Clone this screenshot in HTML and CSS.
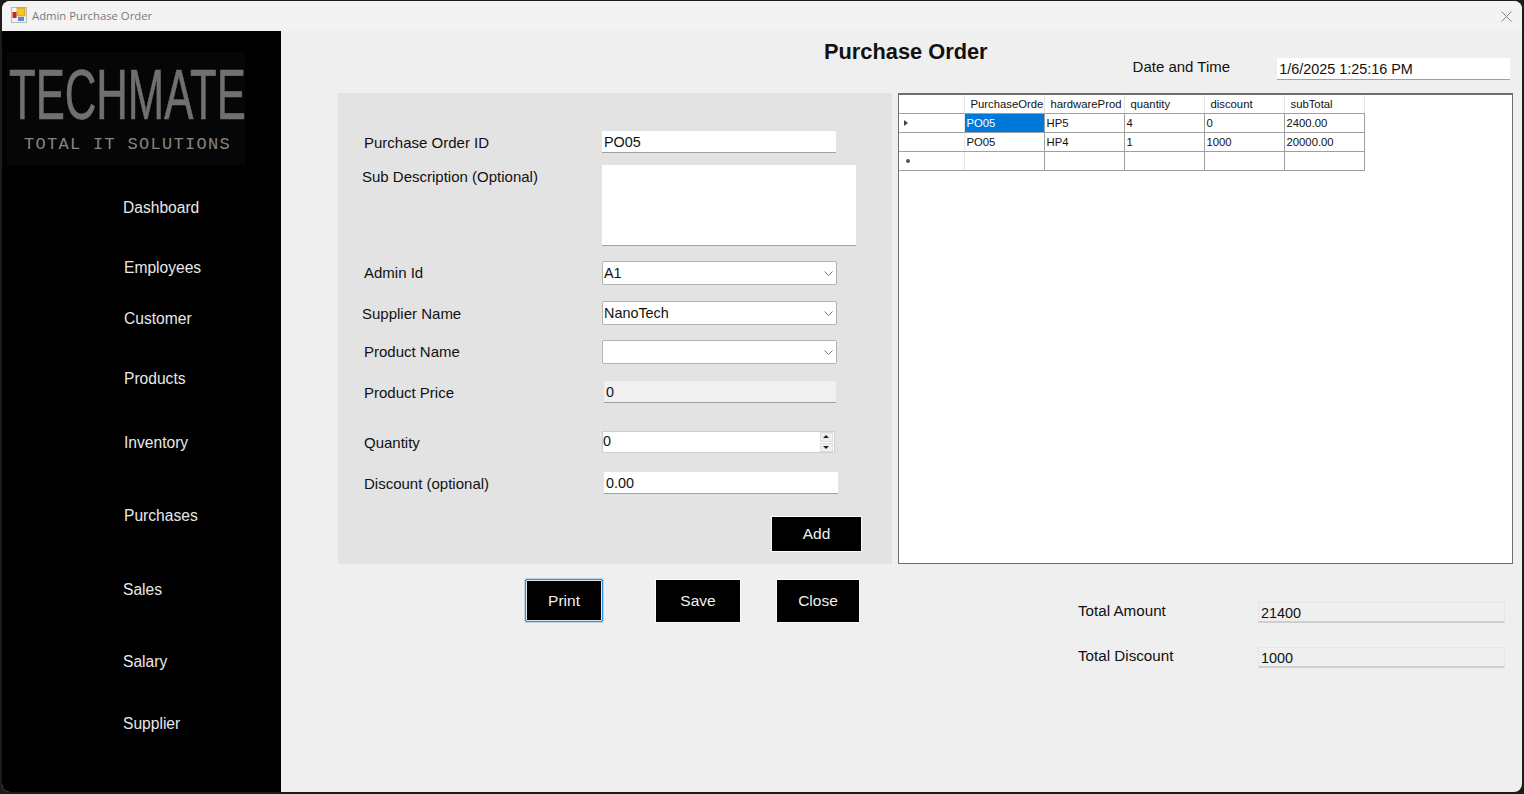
FILE: index.html
```html
<!DOCTYPE html>
<html>

<head>
    <title>Admin Purchase Order</title>
    <link rel="stylesheet" href="styles.css">
</head>

<body>
    <div class="window">
        <div class="titlebar">
            <svg class="app-icon" width="16" height="16" viewBox="0 0 16 16">
                <rect x="0.5" y="0.5" width="15" height="15" fill="#f4f4f4" stroke="#b9b9b9" />
                <rect x="6" y="1" width="8" height="8" fill="#f7c522" stroke="#b98a10" stroke-width="0.6" />
                <rect x="1.5" y="5" width="4" height="6" fill="#c8281e" />
                <rect x="7" y="10" width="6" height="4" fill="#5c86d8" />
            </svg>
            <span class="window-title">Admin Purchase Order</span>
            <svg class="close-x" width="11" height="11" viewBox="0 0 11 11">
                <path d="M0.5 0.5 L10.5 10.5 M10.5 0.5 L0.5 10.5" stroke="#777" stroke-width="0.9" fill="none" />
            </svg>
        </div>

        <div class="content">
            <aside class="sidebar">
                <div class="logo">
                    <div class="logo-main">TECHMATE</div>
                    <div class="logo-sub">TOTAL IT SOLUTIONS</div>
                </div>
                <nav class="nav">
                    <a class="nav-link nudge-left">Dashboard</a>
                    <a class="nav-link">Employees</a>
                    <a class="nav-link">Customer</a>
                    <a class="nav-link">Products</a>
                    <a class="nav-link">Inventory</a>
                    <a class="nav-link">Purchases</a>
                    <a class="nav-link nudge-left">Sales</a>
                    <a class="nav-link nudge-left">Salary</a>
                    <a class="nav-link nudge-left">Supplier</a>
                </nav>
            </aside>

            <main class="main">
                <div class="top-row">
                    <h1 class="page-title">Purchase Order</h1>
                    <span class="date-label">Date and Time</span>
                    <div class="field date-field">1/6/2025 1:25:16 PM</div>
                </div>

                <div class="middle-row">
                    <section class="form-panel">
                        <div class="row row-id">
                            <label class="row-label">Purchase Order ID</label>
                            <div class="field id-field">PO05</div>
                        </div>
                        <div class="row row-desc">
                            <label class="row-label label-left">Sub Description (Optional)</label>
                            <div class="field desc-field"></div>
                        </div>
                        <div class="row row-admin">
                            <label class="row-label">Admin Id</label>
                            <div class="combo">A1<svg class="chevron" width="9" height="5" viewBox="0 0 9 5"><path d="M0.5 0.5 L4.5 4.5 L8.5 0.5" fill="none" stroke="#777" /></svg></div>
                        </div>
                        <div class="row row-supplier">
                            <label class="row-label label-left">Supplier Name</label>
                            <div class="combo">NanoTech<svg class="chevron" width="9" height="5" viewBox="0 0 9 5"><path d="M0.5 0.5 L4.5 4.5 L8.5 0.5" fill="none" stroke="#777" /></svg></div>
                        </div>
                        <div class="row row-product">
                            <label class="row-label">Product Name</label>
                            <div class="combo"><svg class="chevron" width="9" height="5" viewBox="0 0 9 5"><path d="M0.5 0.5 L4.5 4.5 L8.5 0.5" fill="none" stroke="#777" /></svg></div>
                        </div>
                        <div class="row row-price">
                            <label class="row-label">Product Price</label>
                            <div class="field price-field">0</div>
                        </div>
                        <div class="row row-qty">
                            <label class="row-label">Quantity</label>
                            <div class="spinner">0
                                <div class="spin-buttons">
                                    <span class="spin-up"></span>
                                    <span class="spin-down"></span>
                                </div>
                            </div>
                        </div>
                        <div class="row row-discount">
                            <label class="row-label">Discount (optional)</label>
                            <div class="field discount-field">0.00</div>
                        </div>
                        <div class="add-row">
                            <button class="black-btn add-btn">Add</button>
                        </div>
                    </section>

                    <section class="grid-box">
                        <table class="data-grid">
                            <tr>
                                <th class="row-head"></th>
                                <th>PurchaseOrde</th>
                                <th>hardwareProd</th>
                                <th>quantity</th>
                                <th>discount</th>
                                <th>subTotal</th>
                            </tr>
                            <tr>
                                <td class="row-head"><span class="arrow"></span></td>
                                <td class="selected">PO05</td>
                                <td>HP5</td>
                                <td>4</td>
                                <td>0</td>
                                <td>2400.00</td>
                            </tr>
                            <tr>
                                <td class="row-head"></td>
                                <td>PO05</td>
                                <td>HP4</td>
                                <td>1</td>
                                <td>1000</td>
                                <td>20000.00</td>
                            </tr>
                            <tr>
                                <td class="row-head"><span class="star"></span></td>
                                <td></td>
                                <td></td>
                                <td></td>
                                <td></td>
                                <td></td>
                            </tr>
                        </table>
                    </section>
                </div>

                <div class="bottom-row">
                    <div class="actions">
                        <button class="black-btn print-btn">Print</button>
                        <button class="black-btn save-btn">Save</button>
                        <button class="black-btn close-btn">Close</button>
                    </div>
                    <div class="totals">
                        <div class="total-row">
                            <span class="total-label">Total Amount</span>
                            <div class="field total-field">21400</div>
                        </div>
                        <div class="total-row">
                            <span class="total-label">Total Discount</span>
                            <div class="field total-field">1000</div>
                        </div>
                    </div>
                </div>
            </main>
        </div>
    </div>
</body>

</html>
```

FILE: styles.css
```css
* {
    box-sizing: border-box;
}

html,
body {
    height: 100%;
}

body {
    font-family: "Liberation Sans", Arial, sans-serif;
    font-size: 15px;
    color: #111;
    margin: 0;
    background-color: #1c1c1c;
    overflow: hidden;
}

.window {
    margin: 1px 2px 0 2px;
    height: 791px;
    background-color: #efefef;
    border-radius: 8px;
    overflow: hidden;
    display: flex;
    flex-direction: column;
}

.titlebar {
    height: 30px;
    background-color: #f3f3f3;
    display: flex;
    align-items: center;
    padding-left: 9px;
    padding-right: 10px;
}

.app-icon {
    margin-top: -2px;
}

.window-title {
    font-family: "Open Sans", sans-serif;
    font-size: 11.3px;
    color: #7b7b7b;
    margin: -2px 0 0 5px;
    flex: 1;
}

.content {
    flex: 1;
    display: flex;
    min-height: 0;
}

/* left menu */
.sidebar {
    width: 279px;
    background-color: #000;
    flex-shrink: 0;
}

.logo {
    margin: 21px 0 0 5px;
    width: 238px;
    height: 113px;
    background-color: #060606;
    padding-top: 9px;
}

.logo-main {
    font-size: 71px;
    line-height: 68px;
    color: #707070;
    white-space: nowrap;
    transform: scaleX(0.615);
    transform-origin: left top;
    -webkit-text-stroke: 0.7px #707070;
    margin-left: 2px;
}

.logo-sub {
    font-family: "Liberation Mono", monospace;
    font-size: 17px;
    line-height: 20px;
    letter-spacing: 1.3px;
    color: #858585;
    margin: 6px 0 0 17px;
    white-space: nowrap;
}

.nav {
    display: grid;
    grid-template-rows: 60px 51px 60px 64px 73px 74px 72px 62px 30px;
    margin-top: 33px;
    font-size: 15.6px;
}

.nav-link {
    color: #e8e8e8;
    height: 20px;
    line-height: 20px;
    padding-left: 122px;
}

.nudge-left {
    padding-left: 121px;
}

/* main part */
.main {
    flex: 1;
    min-width: 0;
    display: flex;
    flex-direction: column;
}

.top-row {
    height: 62px;
    display: flex;
    align-items: flex-start;
}

.page-title {
    font-size: 21.8px;
    line-height: 24px;
    margin: 9px 0 0 543px;
    white-space: nowrap;
}

.date-label {
    line-height: 20px;
    margin: 26px 0 0 145px;
    white-space: nowrap;
}

.field {
    background-color: #fff;
    border-bottom: 1px solid #a0a0a0;
    font-size: 14.4px;
    line-height: 22px;
    padding-left: 2px;
    white-space: nowrap;
}

.date-field {
    width: 233px;
    height: 22px;
    margin: 27px 0 0 47px;
}

.middle-row {
    display: flex;
    margin-left: 57px;
    height: 471px;
}

.form-panel {
    width: 554px;
    background-color: #e3e3e3;
    padding: 38px 0 0 26px;
    flex-shrink: 0;
}

.row {
    display: flex;
    align-items: flex-start;
}

.row-label {
    width: 238px;
    line-height: 20px;
    margin-top: 2px;
    flex-shrink: 0;
}

.label-left {
    width: 240px;
    margin-left: -2px;
}

.id-field {
    width: 234px;
    height: 22px;
}

.row-desc {
    margin-top: 12px;
}

.desc-field {
    width: 254px;
    height: 81px;
}

.row-admin {
    margin-top: 15px;
}

.row-supplier {
    margin-top: 16px;
}

.row-supplier .row-label {
    margin-top: 3px;
}

.row-product {
    margin-top: 15px;
}

.row-price {
    margin-top: 17px;
}

.row-qty {
    margin-top: 28px;
}

.row-discount {
    margin-top: 19px;
}

.combo {
    width: 235px;
    height: 24px;
    background-color: #fff;
    border: 1px solid #b4b4b4;
    border-radius: 2px;
    font-size: 14.4px;
    line-height: 22px;
    padding-left: 1px;
    display: flex;
    align-items: center;
    position: relative;
}

.chevron {
    position: absolute;
    right: 3px;
    top: 9px;
}

.price-field {
    width: 232px;
    height: 22px;
    margin-left: 2px;
    background-color: #f0f0f0;
}

.spinner {
    width: 233px;
    height: 22px;
    background-color: #fff;
    border: 1px solid #cfcfcf;
    font-size: 14.4px;
    line-height: 19px;
    position: relative;
}

.spin-buttons {
    position: absolute;
    right: 1px;
    top: 0;
    width: 13px;
    height: 20px;
    display: flex;
    flex-direction: column;
    gap: 1px;
}

.spin-up,
.spin-down {
    flex: 1;
    background-color: #efefef;
    border: 1px solid #dcdcdc;
    position: relative;
}

.spin-up::after,
.spin-down::after {
    content: "";
    position: absolute;
    left: 2px;
    top: 2px;
    border-left: 3px solid transparent;
    border-right: 3px solid transparent;
}

.spin-up::after {
    border-bottom: 3px solid #222;
}

.spin-down::after {
    border-top: 3px solid #222;
}

.discount-field {
    width: 234px;
    height: 22px;
    margin-left: 2px;
}

.add-row {
    display: flex;
    margin-top: 23px;
    padding-left: 408px;
}

.black-btn {
    font-family: "Liberation Sans", Arial, sans-serif;
    font-size: 15.5px;
    background-color: #000;
    color: #f0f0f0;
    border: 1px solid #000;
    outline: 1px solid #fafafa;
    padding: 0;
}

.add-btn {
    width: 89px;
    height: 34px;
}

.grid-box {
    width: 615px;
    margin-left: 6px;
    background-color: #fff;
    border: 1px solid #6e6e6e;
    border-top-width: 2px;
    flex-shrink: 0;
    overflow: hidden;
}

.data-grid {
    border-collapse: collapse;
    table-layout: fixed;
    width: 465px;
    font-size: 11.3px;
}

.data-grid th,
.data-grid td {
    width: 80px;
    height: 19px;
    padding: 0 0 0 2px;
    font-weight: normal;
    text-align: left;
    overflow: hidden;
    white-space: nowrap;
    border: 1px solid #a0a0a0;
}

.data-grid th {
    height: 18px;
    background-color: #fff;
    padding-left: 6px;
    border: 0;
    border-right: 1px solid #e4e4e4;
    border-bottom: 1px solid #a0a0a0;
}

.data-grid .row-head {
    width: 65px;
    border-left: 0;
    border-color: #e4e4e4;
    border-bottom-color: #a0a0a0;
    padding-left: 5px;
}

.data-grid .selected {
    background-color: #0078d7;
    color: #fff;
}

.arrow {
    display: block;
    width: 0;
    height: 0;
    border-left: 4px solid #444;
    border-top: 3px solid transparent;
    border-bottom: 3px solid transparent;
}

.star {
    display: block;
    width: 4px;
    height: 4px;
    margin-left: 2px;
    border-radius: 50%;
    background-color: #555;
}

.bottom-row {
    display: flex;
    flex: 1;
}

.actions {
    display: flex;
    align-items: flex-start;
    margin: 15px 0 0 244px;
}

.print-btn {
    width: 78px;
    height: 43px;
    border: 1px solid #2f8fe0;
    outline: 0;
    box-shadow: inset 0 0 0 1px #e4e4e4, 0 0 0 1px rgba(60, 150, 230, 0.3);
    border-radius: 2px;
}

.save-btn {
    width: 84px;
    height: 42px;
    margin: 1px 0 0 53px;
}

.close-btn {
    width: 82px;
    height: 42px;
    margin: 1px 0 0 37px;
}

.totals {
    margin: 38px 0 0 219px;
}

.total-row {
    display: flex;
    align-items: flex-start;
    margin-bottom: 24px;
}

.total-label {
    width: 180px;
    font-size: 15.2px;
    line-height: 20px;
    margin-top: -1px;
}

.total-field {
    width: 247px;
    height: 21px;
    line-height: 21px;
    background-color: #efefef;
    border: 1px solid #e6e6e6;
    border-bottom: 2px solid #cfcfcf;
}
```
